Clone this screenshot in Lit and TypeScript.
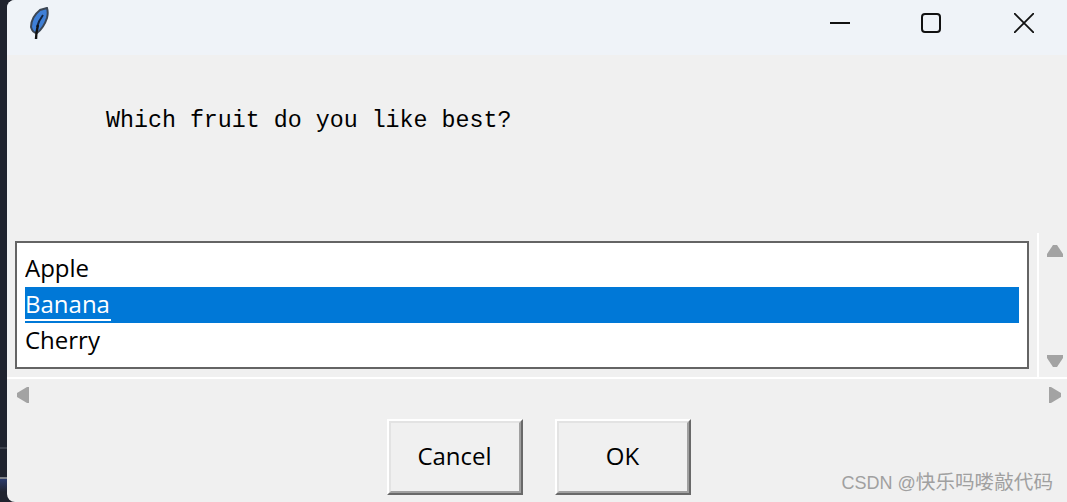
import { LitElement, html, css } from "lit";
import { customElement } from "lit/decorators.js";

@customElement("app-root")
export class AppRoot extends LitElement {
  static styles = css`
    :host { display: block; width: 1067px; height: 502px; overflow: hidden; position: relative; background: #1f232e; }
    .desk { display: flex; height: 502px; background: linear-gradient(to bottom, #1f232e 0, #1f232e 447px, #3d414b 447px, #3d414b 449px, #1f232e 449px, #1f232e 477px, #80838a 477px, #80838a 479px, #2a3a6a 479px, #1f232e 492px); }
    .window { margin-left: 7px; width: 1060px; height: 502px; display: flex; flex-direction: column; background: #f0f0f0; border-radius: 8px 0 0 8px; overflow: hidden; }
    .title { height: 55px; flex: none; background: #eff3f8; display: flex; align-items: center; }
    .feather { margin: -7px 0 0 22px; width: 20px; height: 34px; flex: none; filter: blur(0.5px); }
    .spacer { flex: 1; }
    .wbtn { width: 40px; height: 46px; margin-top: -9px; display: flex; align-items: center; justify-content: center; flex: none; }
    .wbtn svg { display: block; }
    .wbtn.min { margin-right: 51px; }
    .wbtn.max { margin-right: 53px; }
    .wbtn.close { margin-right: 23px; }
    .prompt { height: 178px; flex: none; box-sizing: border-box; padding: 49px 0 0 99px; font: 23.3px/34px "Liberation Mono", monospace; color: #000; white-space: pre; }
    .mid { display: flex; height: 144px; flex: none; }
    .listwrap { flex: 1; box-sizing: border-box; padding: 8px; }
    .list { box-sizing: border-box; height: 128px; border: 2px solid #646464; background: #fff; padding: 8px; font: 24px/34px "Open Sans", "Noto Sans", sans-serif; color: #000; }
    .item { height: 36px; white-space: pre; overflow: hidden; }
    .item.sel { background: #0078d7; color: #fff; }
    .item.sel span { display: inline-block; height: 32px; border-bottom: 2px solid #fff; padding-right: 1px; }
    .vbar { width: 28px; flex: none; border-left: 2px solid #fff; display: flex; flex-direction: column; justify-content: space-between; align-items: center; padding: 12px 0 10px; height: 122px; }
    .vbar svg { display: block; margin-left: 4px; }
    .hbar { height: 32px; flex: none; border-top: 2px solid #fff; display: flex; justify-content: space-between; align-items: center; padding: 0 6px 0 10px; }
    .hbar svg { display: block; }
    .buttons { display: flex; justify-content: center; gap: 32px; padding: 8px 0 0 0; margin-left: 3px; }
    .btn { box-sizing: border-box; width: 136px; height: 76px; background: #f0f0f0; border: 2px solid; border-color: #fff #696969 #696969 #fff; display: flex; }
    .btn span { flex: 1; border: 2px solid; border-color: #e3e3e3 #a0a0a0 #a0a0a0 #e3e3e3; padding-bottom: 4px; display: flex; align-items: center; justify-content: center; font: 24px "Open Sans", "Noto Sans", sans-serif; color: #000; }
    .mark { position: absolute; right: 14px; top: 469px; font: 19.6px/26px "Liberation Sans", "Noto Sans CJK SC", sans-serif; color: #a0a0a0; white-space: pre; }
    .mark span { font-size: 18px; }
  `;

  render() {
    return html`
      <div class="desk">
        <div class="window">
          <div class="title">
            <svg class="feather" viewBox="0 0 20 34">
              <path d="M18 1 L11 3 C6 7 2 13 2 20 C3 24 5 26 8 26 C12 23 16 17 18 11 C19 7 19 4 18 1 Z" fill="#3f7fd6" stroke="#3c4654" stroke-width="2" />
              <path d="M14 8 C11 12 9 16 8 20" stroke="#12233f" stroke-width="2" fill="none" />
              <path d="M9 18 C8 22 7 27 7 32" stroke="#111" stroke-width="2.4" fill="none" />
            </svg>
            <div class="spacer"></div>
            <div class="wbtn min"><svg width="20" height="20" viewBox="0 0 20 20"><path d="M0 10H20" stroke="#111" stroke-width="2" /></svg></div>
            <div class="wbtn max"><svg width="20" height="20" viewBox="0 0 20 20"><rect x="1" y="1" width="18" height="18" rx="3" fill="none" stroke="#111" stroke-width="2" /></svg></div>
            <div class="wbtn close"><svg width="20" height="20" viewBox="0 0 20 20"><path d="M0 0L20 20M20 0L0 20" stroke="#111" stroke-width="1.8" /></svg></div>
          </div>
          <div class="prompt">Which fruit do you like best?</div>
          <div class="mid">
            <div class="listwrap">
              <div class="list">
                <div class="item"><span>Apple</span></div>
                <div class="item sel"><span>Banana</span></div>
                <div class="item"><span>Cherry</span></div>
              </div>
            </div>
            <div class="vbar">
              <svg width="16" height="12" viewBox="0 0 16 12"><path d="M6 0H10L16 9V12H0V9Z" fill="#a3a3a3" /></svg>
              <svg width="16" height="12" viewBox="0 0 16 12"><path d="M0 0H16V3L10 12H6L0 3Z" fill="#a3a3a3" /></svg>
            </div>
          </div>
          <div class="hbar">
            <svg width="12" height="16" viewBox="0 0 12 16"><path d="M12 0V16H10L0 10V6L10 0Z" fill="#a3a3a3" /></svg>
            <svg width="12" height="16" viewBox="0 0 12 16"><path d="M0 0V16H2L12 10V6L2 0Z" fill="#a3a3a3" /></svg>
          </div>
          <div class="buttons">
            <div class="btn"><span>Cancel</span></div>
            <div class="btn"><span>OK</span></div>
          </div>
        </div>
      </div>
      <div class="mark"><span>CSDN @</span>快乐吗喽敲代码</div>
    `;
  }
}
